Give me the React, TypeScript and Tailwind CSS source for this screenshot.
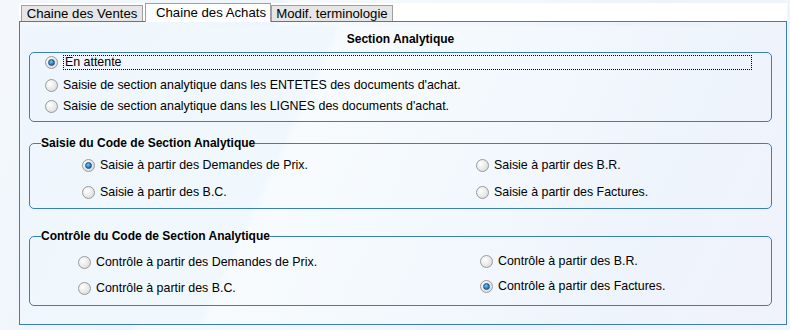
import React from "react";

// Radio bullet drawn with CSS (Windows-style)
const Radio = ({ checked = false }: { checked?: boolean }) => (
  <span className="flex h-[13px] w-[13px] shrink-0 items-center justify-center rounded-full border border-[#9a9a9a] bg-[radial-gradient(circle_at_35%_35%,#ffffff_0%,#e6e6e6_60%,#cfcfcf_100%)]">
    {checked && (
      <span className="h-[7px] w-[7px] rounded-full border border-[#1a4f80] bg-[radial-gradient(circle_at_40%_35%,#7cc4f2_0%,#2a83c6_55%,#15508a_100%)]" />
    )}
  </span>
);

const Option = ({
  label,
  checked = false,
  focused = false,
  className = "",
}: {
  label: string;
  checked?: boolean;
  focused?: boolean;
  className?: string;
}) => (
  <div className={`flex h-[15px] items-center gap-[5px] text-[12.4px] ${className}`}>
    <Radio checked={checked} />
    <span
      className={
        focused
          ? "flex h-[15px] flex-1 items-center border border-dotted border-black pl-[1px] leading-none"
          : "leading-none"
      }
    >
      {label}
    </span>
  </div>
);

const Tab = ({ label, active = false, width }: { label: string; active?: boolean; width: string }) => (
  <div
    className={
      active
        ? `relative z-10 -mb-px flex h-[19px] items-center justify-center border border-b-0 border-[#a0a0a0] bg-white pl-[6px] text-[13.2px] leading-none whitespace-nowrap ${width}`
        : `flex h-[16px] items-center justify-center border border-b-0 border-[#a0a0a0] bg-[#e6e6e6] text-[13.2px] leading-none whitespace-nowrap ${width}`
    }
  >
    {label}
  </div>
);

export default function App() {
  return (
    <div
      className="h-[330px] w-[790px] overflow-hidden bg-[linear-gradient(115deg,#f4f8fc_0%,#eef5fc_30%,#f6fafe_31%,#f1f7fd_55%,#ecf3fb_70%,#f3f6fc_100%)] pt-[3px] pr-[3px] pl-[19px] text-[12px] text-black"
      style={{ fontFamily: '"Liberation Sans", Arial, sans-serif' }}
    >
      {/* Tab strip */}
      <div className="flex h-[18px] items-end bg-white pl-[2px]">
        <Tab label="Chaine des Ventes" width="w-[122px]" />
        <div className="w-[2px]" />
        <Tab label="Chaine des Achats" width="w-[126px]" active />
        <Tab label="Modif. terminologie" width="w-[122px]" />
      </div>

      {/* Panel */}
      <div className="h-[304px] border border-[#3a7ebf] p-[1px] pt-[4px]">
        <div className="h-full bg-[linear-gradient(115deg,#eef5fc_0%,#f1f8fd_35%,#f7fbfe_36%,#f2f8fd_60%,#eef4fb_80%,#f1f2fb_100%)] pr-[13px] pl-[8px]">
          <div className="flex h-[26px] items-center justify-center font-bold">Section Analytique</div>

          {/* Group 1 */}
          <div className="flex h-[70px] flex-col gap-[6px] rounded-[5px] border border-[#3a7ebf] pt-[2px] pr-[19px] pl-[15px]">
            <Option label="En attente" checked focused className="mb-[2px]" />
            <Option label="Saisie de section analytique dans les ENTETES des documents d'achat." />
            <Option label="Saisie de section analytique dans les LIGNES des documents d'achat." />
          </div>

          {/* Group 2 */}
          <fieldset className="mt-[14px] h-[73px] rounded-[5px] border border-[#3a7ebf] pl-[11px]">
            <legend className="px-0 leading-[14px] font-bold">Saisie du Code de Section Analytique</legend>
            <div className="ml-[41px] grid grid-cols-[394px_1fr] gap-y-[12px] pt-[8px]">
              <Option label="Saisie à partir des Demandes de Prix." checked />
              <Option label="Saisie à partir des B.R." />
              <Option label="Saisie à partir des B.C." />
              <Option label="Saisie à partir des Factures." />
            </div>
          </fieldset>

          {/* Group 3 */}
          <fieldset className="mt-[20px] h-[77px] rounded-[5px] border border-[#3a7ebf] pl-[11px]">
            <legend className="px-0 leading-[14px] font-bold">Contrôle du Code de Section Analytique</legend>
            <div className="ml-[37px] grid grid-cols-[402px_1fr] pt-[10px]">
              <div className="flex flex-col gap-[11px] pt-[2px]">
                <Option label="Contrôle à partir des Demandes de Prix." />
                <Option label="Contrôle à partir des B.C." />
              </div>
              <div className="flex flex-col gap-[10px] pt-[1px]">
                <Option label="Contrôle à partir des B.R." />
                <Option label="Contrôle à partir des Factures." checked />
              </div>
            </div>
          </fieldset>
        </div>
      </div>
    </div>
  );
}
